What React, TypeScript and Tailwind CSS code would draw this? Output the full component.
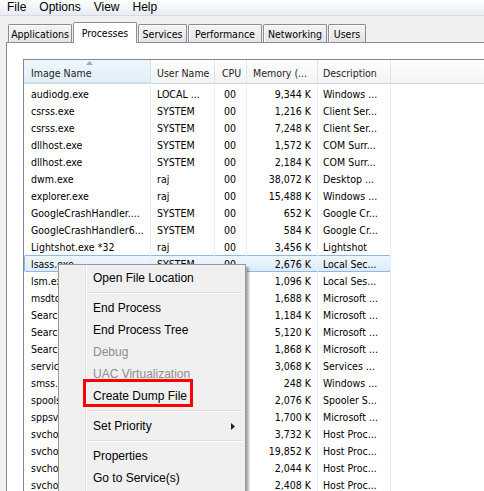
import React from 'react';

type Row = { name: string; user: string; cpu: string; mem: string; desc: string };

const rows: Row[] = [
  { name: 'audiodg.exe', user: 'LOCAL ...', cpu: '00', mem: '9,344 K', desc: 'Windows ...' },
  { name: 'csrss.exe', user: 'SYSTEM', cpu: '00', mem: '1,216 K', desc: 'Client Ser...' },
  { name: 'csrss.exe', user: 'SYSTEM', cpu: '00', mem: '7,248 K', desc: 'Client Ser...' },
  { name: 'dllhost.exe', user: 'SYSTEM', cpu: '00', mem: '1,572 K', desc: 'COM Surr...' },
  { name: 'dllhost.exe', user: 'SYSTEM', cpu: '00', mem: '2,184 K', desc: 'COM Surr...' },
  { name: 'dwm.exe', user: 'raj', cpu: '00', mem: '38,072 K', desc: 'Desktop ...' },
  { name: 'explorer.exe', user: 'raj', cpu: '00', mem: '15,488 K', desc: 'Windows ...' },
  { name: 'GoogleCrashHandler....', user: 'SYSTEM', cpu: '00', mem: '652 K', desc: 'Google Cr...' },
  { name: 'GoogleCrashHandler6...', user: 'SYSTEM', cpu: '00', mem: '584 K', desc: 'Google Cr...' },
  { name: 'Lightshot.exe *32', user: 'raj', cpu: '00', mem: '3,456 K', desc: 'Lightshot' },
  { name: 'lsass.exe', user: 'SYSTEM', cpu: '00', mem: '2,676 K', desc: 'Local Sec...' },
  // rows below sit under the context menu: their user / cpu cells are hidden
  { name: 'lsm.exe', user: '', cpu: '', mem: '1,096 K', desc: 'Local Ses...' },
  { name: 'msdtc.exe', user: '', cpu: '', mem: '1,688 K', desc: 'Microsoft ...' },
  { name: 'SearchFilterHost.exe', user: '', cpu: '', mem: '1,184 K', desc: 'Microsoft ...' },
  { name: 'SearchIndexer.exe', user: '', cpu: '', mem: '5,120 K', desc: 'Microsoft ...' },
  { name: 'SearchProtocolHost...', user: '', cpu: '', mem: '1,868 K', desc: 'Microsoft ...' },
  { name: 'services.exe', user: '', cpu: '', mem: '3,068 K', desc: 'Services ...' },
  { name: 'smss.exe', user: '', cpu: '', mem: '248 K', desc: 'Windows ...' },
  { name: 'spoolsv.exe', user: '', cpu: '', mem: '2,076 K', desc: 'Spooler S...' },
  { name: 'sppsvc.exe', user: '', cpu: '', mem: '1,700 K', desc: 'Microsoft ...' },
  { name: 'svchost.exe', user: '', cpu: '', mem: '3,732 K', desc: 'Host Proc...' },
  { name: 'svchost.exe', user: '', cpu: '', mem: '19,852 K', desc: 'Host Proc...' },
  { name: 'svchost.exe', user: '', cpu: '', mem: '2,044 K', desc: 'Host Proc...' },
  { name: 'svchost.exe', user: '', cpu: '', mem: '2,408 K', desc: 'Host Proc...' },
];

const tabs = [
  { label: 'Applications', w: 'w-[64px]' },
  { label: 'Processes', w: 'w-[64px]', active: true },
  { label: 'Services', w: 'w-[49px]' },
  { label: 'Performance', w: 'w-[74px]' },
  { label: 'Networking', w: 'w-[64px]' },
  { label: 'Users', w: 'w-[38px]' },
];

const tahoma = "font-['DejaVu_Sans_Condensed','Liberation_Sans',sans-serif]";
const segoe = "font-['Liberation_Sans',sans-serif]";

type MenuEntry = { label?: string; disabled?: boolean; sub?: boolean; sep?: boolean };

const menu: MenuEntry[] = [
  { label: 'Open File Location' },
  { sep: true },
  { label: 'End Process' },
  { label: 'End Process Tree' },
  { label: 'Debug', disabled: true },
  { label: 'UAC Virtualization', disabled: true },
  { label: 'Create Dump File' },
  { sep: true },
  { label: 'Set Priority', sub: true },
  { sep: true },
  { label: 'Properties' },
  { label: 'Go to Service(s)' },
];

const ContextMenu: React.FC = () => (
  <div className="absolute left-[58px] top-[264px] w-[188px] border border-[#979797] p-[2px] bg-[linear-gradient(to_right,#f0f0f0_26px,#e2e3e3_26px,#e2e3e3_27px,#ffffff_27px,#ffffff_28px,#f0f0f0_28px)] shadow-[3px_3px_2px_rgba(0,0,0,0.3)] z-20">
    {menu.map((m, i) =>
      m.sep ? (
        <div key={i} className="h-[8px] flex flex-col justify-center pl-[27px]">
          <div className="h-[2px] border-t border-[#e0e0e0] border-b border-b-white" />
        </div>
      ) : (
        <div
          key={i}
          className={`h-[22px] flex items-center justify-between pl-[32px] pr-[8px] text-[12px] ${segoe} ${
            m.disabled ? 'text-[#8d8d8d]' : 'text-black'
          }`}
        >
          <span>{m.label}</span>
          {m.sub && (
            <svg width="4" height="7" viewBox="0 0 4 7">
              <polygon points="0,0 4,3.5 0,7" fill="#222" />
            </svg>
          )}
        </div>
      )
    )}
    {/* red highlight drawn over the screenshot */}
    <div className="absolute left-[24px] top-[114px] w-[110px] h-[28px] border-[3px] border-[#ff0000]" />
  </div>
);

const cellW = ['w-[127px]', 'w-[64px]', 'w-[32px]', 'w-[71px]', 'w-[73px]'];

const App: React.FC = () => {
  return (
    <div className={`relative w-[484px] h-[491px] overflow-hidden bg-[#f0f0f0] ${tahoma}`}>
      {/* menu bar */}
      <div className={`h-[16px] flex items-center gap-[13px] pl-[7px] pb-[1px] text-[12px] text-black bg-gradient-to-b from-[#fdfeff] to-[#e7ecf3] border-b border-[#d6dbe3] ${segoe}`}>
        <span>File</span>
        <span>Options</span>
        <span>View</span>
        <span>Help</span>
      </div>

      {/* tabs */}
      <div className="h-[27px] flex items-end gap-[1px] pl-[8px]">
        {tabs.map((t) =>
          t.active ? (
            <div
              key={t.label}
              className={`${t.w} h-[21px] relative z-10 bg-white border border-b-0 border-[#898c95] rounded-t-[2px] flex items-start justify-center pt-[3px] text-[10.5px] text-black`}
            >
              {t.label}
            </div>
          ) : (
            <div
              key={t.label}
              className={`${t.w} h-[18px] mb-[1px] border border-b-0 border-[#898c95] rounded-t-[2px] bg-gradient-to-b from-[#f4f4f4] to-[#e4e4e4] shadow-[inset_1px_1px_0_#ffffff] flex items-center justify-center pt-[2px] text-[10.5px] text-black`}
            >
              {t.label}
            </div>
          )
        )}
      </div>

      {/* tab panel */}
      <div className="-mt-[1px] ml-[6px] w-[600px] h-[460px] border-l border-t border-[#898c95] bg-white pt-[16px] pl-[16px]">
        <div className="border border-[#828790] bg-white h-[500px] text-[10.5px]">
          {/* header */}
          <div className="h-[24px] flex border-b border-[#d5d5d5] bg-gradient-to-b from-white to-[#f2f3f5] text-[#1e1e1e]">
            <div className={`${cellW[0]} relative flex items-center pl-[7px] pt-[4px] border-r border-[#cfe3f3] bg-gradient-to-b from-[#eff7fd] to-[#dfeefa] shadow-[inset_0_-1px_0_#c4e2f7]`}>
              <svg className="absolute left-[62px] top-[1px]" width="7" height="4" viewBox="0 0 7 4">
                <polygon points="3.5,0 7,4 0,4" fill="#9aabc2" />
              </svg>
              Image Name
            </div>
            <div className={`${cellW[1]} flex items-center pl-[6px] pt-[4px] border-r border-[#e2e3e5]`}>User Name</div>
            <div className={`${cellW[2]} flex items-center pl-[7px] pt-[4px] border-r border-[#e2e3e5]`}>CPU</div>
            <div className={`${cellW[3]} flex items-center pl-[6px] pt-[4px] border-r border-[#e2e3e5]`}>Memory (...</div>
            <div className={`${cellW[4]} flex items-center pl-[5px] pt-[4px] border-r border-[#e2e3e5]`}>Description</div>
            <div className="flex-1" />
          </div>

          {/* body */}
          <div className="pt-[1px] text-black">
            {rows.map((r, i) => {
              const sel = i === 10;
              return (
                <div key={i} className="h-[17px] flex">
                  <div
                    className={`flex ${
                      sel
                        ? 'rounded-[2px] bg-gradient-to-b from-[#f1f7fe] to-[#d9eafc] shadow-[inset_0_0_0_1px_#8fb7e6]'
                        : ''
                    }`}
                  >
                    <div className={`${cellW[0]} flex items-center pl-[7px] pt-[2px] whitespace-nowrap overflow-hidden border-r border-[#e6eef8]`}>{r.name}</div>
                    <div className={`${cellW[1]} flex items-center pl-[6px] pt-[2px] whitespace-nowrap overflow-hidden border-r border-[#eeeeee]`}>{r.user}</div>
                    <div className={`${cellW[2]} flex items-center pl-[9px] pt-[2px] border-r border-[#eeeeee]`}>{r.cpu}</div>
                    <div className={`${cellW[3]} flex items-center justify-end pr-[6px] pt-[2px] whitespace-nowrap border-r border-[#e6eef8]`}>{r.mem}</div>
                    <div className={`${cellW[4]} flex items-center pl-[5px] pt-[2px] whitespace-nowrap overflow-hidden border-r border-[#e6eef8]`}>{r.desc}</div>
                  </div>
                  <div className="flex-1" />
                </div>
              );
            })}
          </div>
        </div>
      </div>

      <ContextMenu />
    </div>
  );
};

export default App;
